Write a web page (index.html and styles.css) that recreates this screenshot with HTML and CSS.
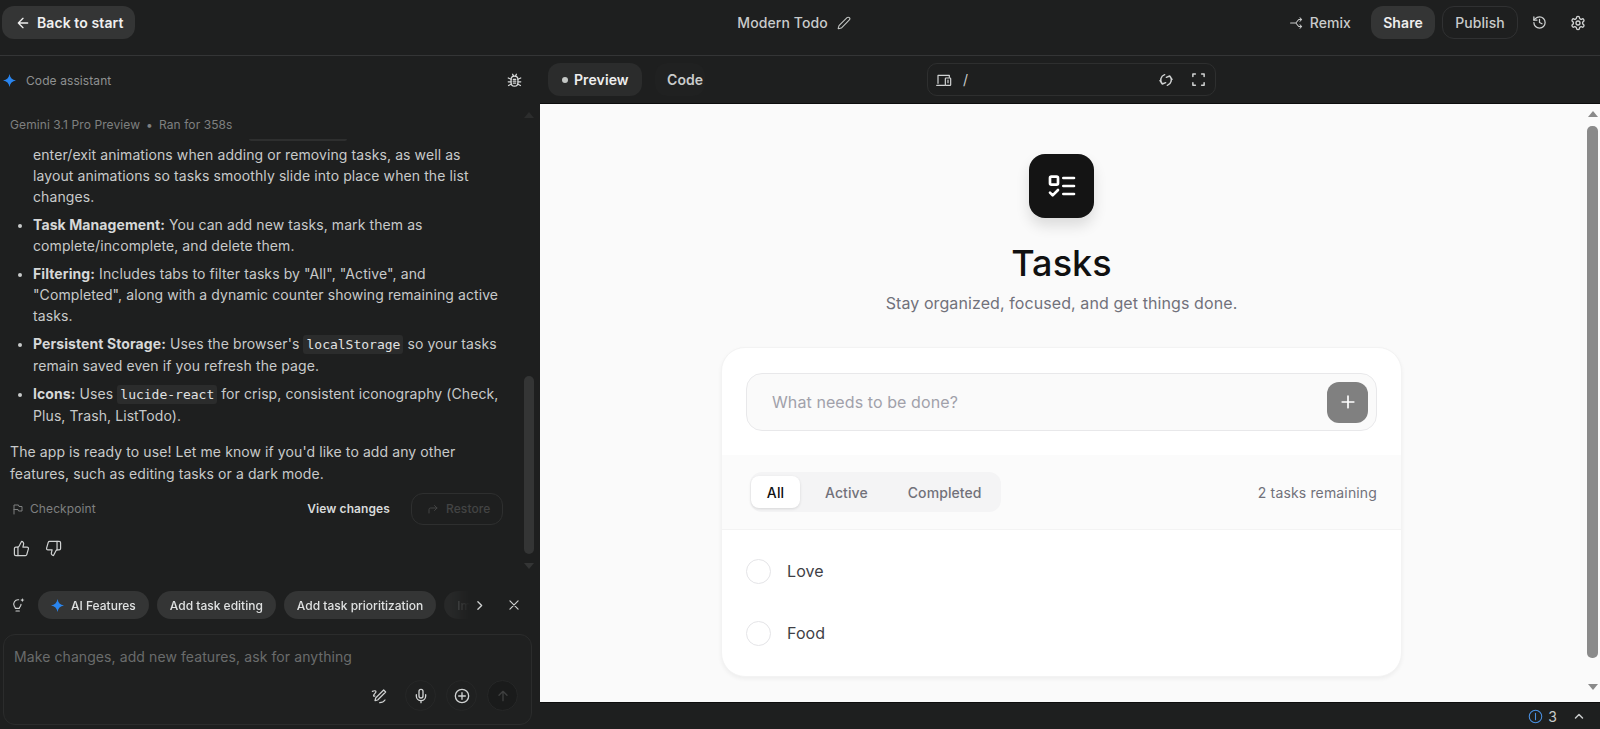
FILE: index.html
```html
<!DOCTYPE html>
<html lang="en">
<head>
<meta charset="utf-8">
<title>Modern Todo</title>
<link rel="stylesheet" href="styles.css">
</head>
<body>
<header class="topbar">
  <div class="top-left">
    <button class="btn btn-fill back"><svg class="ic" viewBox="0 0 24 24"><path d="M19 12H5M12 19l-7-7 7-7"/></svg>Back to start</button>
  </div>
  <div class="top-center">
    <span class="app-title">Modern Todo</span>
    <svg class="ic ic-pencil" viewBox="0 0 24 24"><path d="M21.174 6.812a1 1 0 0 0-3.986-3.987L3.842 16.174a2 2 0 0 0-.5.83l-1.321 4.352a.5.5 0 0 0 .623.622l4.353-1.32a2 2 0 0 0 .83-.497z"/></svg>
  </div>
  <div class="top-right">
    <span class="remix"><svg class="ic ic-remix" viewBox="0 0 24 24"><path d="M1 12h9l5-6h4M10 12l5 6h4M17 3l3 3-3 3M17 15l3 3-3 3"/></svg>Remix</span>
    <button class="btn btn-fill share">Share</button>
    <button class="btn btn-line publish">Publish</button>
    <svg class="ic ic-history" viewBox="0 0 24 24"><path d="M3 12a9 9 0 1 0 9-9 9.75 9.75 0 0 0-6.74 2.74L3 8"/><path d="M3 3v5h5M12 7v5l4 2"/></svg>
    <svg class="ic ic-gear" viewBox="0 0 24 24"><path d="M12.22 2h-.44a2 2 0 0 0-2 2v.18a2 2 0 0 1-1 1.73l-.43.25a2 2 0 0 1-2 0l-.15-.08a2 2 0 0 0-2.73.73l-.22.38a2 2 0 0 0 .73 2.73l.15.1a2 2 0 0 1 1 1.72v.51a2 2 0 0 1-1 1.74l-.15.09a2 2 0 0 0-.73 2.73l.22.38a2 2 0 0 0 2.73.73l.15-.08a2 2 0 0 1 2 0l.43.25a2 2 0 0 1 1 1.73V20a2 2 0 0 0 2 2h.44a2 2 0 0 0 2-2v-.18a2 2 0 0 1 1-1.73l.43-.25a2 2 0 0 1 2 0l.15.08a2 2 0 0 0 2.73-.73l.22-.39a2 2 0 0 0-.73-2.73l-.15-.08a2 2 0 0 1-1-1.74v-.5a2 2 0 0 1 1-1.74l.15-.09a2 2 0 0 0 .73-2.73l-.22-.38a2 2 0 0 0-2.73-.73l-.15.08a2 2 0 0 1-2 0l-.43-.25a2 2 0 0 1-1-1.73V4a2 2 0 0 0-2-2z"/><circle cx="12" cy="12" r="3"/></svg>
  </div>
</header>

<main class="workspace">
  <aside class="assistant">
    <div class="assistant-head">
      <span class="assistant-name">
        <svg class="spark" viewBox="0 0 24 24"><path d="M12 0c1 7 5 11 12 12-7 1-11 5-12 12-1-7-5-11-12-12 7-1 11-5 12-12z"/></svg>
        Code assistant
      </span>
      <svg class="ic ic-bug" viewBox="0 0 24 24"><rect x="6.500" y="5" width="11" height="16" rx="5.500"/><path d="M9 2l1.500 3M15 2l-1.500 3M2 8l4.500 2M22 8l-4.500 2M2 14h4.500M22 14h-4.500M2.500 20l4.500-2.500M21.500 20l-4.500-2.500M10 10h4M10 13h4M10 16h4"/></svg>
    </div>
    <div class="chat-scroll">
      <div class="chat">
        <div class="meta">Gemini 3.1 Pro Preview<span class="meta-dot">•</span>Ran for 358s</div>
        <div class="clip-edge"></div>
        <ul class="points">
          <li class="first">enter/exit animations when adding or removing tasks, as well as layout animations so tasks smoothly slide into place when the list changes.</li>
          <li><b>Task Management:</b> You can add new tasks, mark them as complete/incomplete, and delete them.</li>
          <li><b>Filtering:</b> Includes tabs to filter tasks by "All", "Active", and "Completed", along with a dynamic counter showing remaining active tasks.</li>
          <li><b>Persistent Storage:</b> Uses the browser's <code>localStorage</code> so your tasks remain saved even if you refresh the page.</li>
          <li><b>Icons:</b> Uses <code>lucide-react</code> for crisp, consistent iconography (Check, Plus, Trash, ListTodo).</li>
        </ul>
        <p class="closing">The app is ready to use! Let me know if you'd like to add any other features, such as editing tasks or a dark mode.</p>
        <div class="checkpoint">
          <span class="cp-label"><svg class="ic ic-flag" viewBox="0 0 24 24"><path d="M4 22V4h9l1 3h6v9h-7l-1-3H4"/></svg>Checkpoint</span>
          <span class="view-changes">View changes</span>
          <span class="restore"><svg class="ic ic-restore" viewBox="0 0 24 24"><path d="M4 20v-7a3 3 0 0 1 3-3h13M15 5l5 5-5 5"/></svg>Restore</span>
        </div>
        <div class="feedback">
          <svg class="ic ic-thumb" viewBox="0 0 24 24"><path d="M7 10v12"/><path d="M15 5.880 14 10h5.830a2 2 0 0 1 1.920 2.560l-2.330 8A2 2 0 0 1 17.500 22H4a2 2 0 0 1-2-2v-8a2 2 0 0 1 2-2h2.760a2 2 0 0 0 1.790-1.110L12 2a3.130 3.130 0 0 1 3 3.880Z"/></svg>
          <svg class="ic ic-thumb" viewBox="0 0 24 24"><path d="M17 14V2"/><path d="M9 18.120 10 14H4.170a2 2 0 0 1-1.920-2.560l2.330-8A2 2 0 0 1 6.500 2H20a2 2 0 0 1 2 2v8a2 2 0 0 1-2 2h-2.760a2 2 0 0 0-1.790 1.110L12 22a3.130 3.130 0 0 1-3-3.880Z"/></svg>
        </div>
      </div>
      <div class="chat-bar">
        <span class="arrow-up dim"></span>
        <span class="chat-thumb"></span>
        <span class="arrow-down dim"></span>
      </div>
    </div>
    <div class="suggestions">
      <svg class="ic ic-bulb" viewBox="0 0 24 24"><path d="M13 4.200A6.500 6.500 0 0 0 6.500 14c.7.800 1.500 1.500 1.500 3h6c0-1.500.8-2.200 1.500-3 .7-.800 1-1.700 1-3M9 21h5"/><path class="bulb-star" d="M18.500 1c.3 2.200 1.300 3.200 3.500 3.500-2.200.3-3.200 1.300-3.500 3.500-.3-2.200-1.300-3.200-3.500-3.500 2.200-.3 3.200-1.300 3.500-3.500z"/></svg>
      <div class="chips">
        <span class="chip"><svg class="spark spark-sm" viewBox="0 0 24 24"><path d="M12 0c1 7 5 11 12 12-7 1-11 5-12 12-1-7-5-11-12-12 7-1 11-5 12-12z"/></svg>AI Features</span>
        <span class="chip">Add task editing</span>
        <span class="chip">Add task prioritization</span>
        <span class="chip chip-cut">Improve</span>
      </div>
      <svg class="ic ic-chev" viewBox="0 0 24 24"><path d="M9 5l7 7-7 7"/></svg>
      <svg class="ic ic-close" viewBox="0 0 24 24"><path d="M5 5l14 14M19 5L5 19"/></svg>
    </div>
    <div class="composer">
      <div class="composer-text">Make changes, add new features, ask for anything</div>
      <div class="composer-tools">
        <svg class="ic ic-wand" viewBox="0 0 24 24"><path d="M19 3l3 3L10 18l-4 1 1-4z"/><path d="M2 5c5-2 7 0 4 3s-3 5 0 4M13 22c3 0 6-1 8-4"/></svg>
        <span class="round"><svg class="ic" viewBox="0 0 24 24"><path d="M12 2a3 3 0 0 0-3 3v7a3 3 0 0 0 6 0V5a3 3 0 0 0-3-3Z"/><path d="M19 10v2a7 7 0 0 1-14 0v-2M12 19v3"/></svg></span>
        <span class="round"><svg class="ic" viewBox="0 0 24 24"><circle cx="12" cy="12" r="10"/><path d="M12 7v10M7 12h10"/></svg></span>
        <span class="round send"><svg class="ic" viewBox="0 0 24 24"><path d="M12 19V5M6 11l6-6 6 6"/></svg></span>
      </div>
    </div>
  </aside>

  <section class="stage">
    <div class="stage-bar">
      <div class="tabs">
        <span class="tab tab-on"><i class="tab-dot"></i>Preview</span>
        <span class="tab tab-code">Code</span>
      </div>
      <div class="urlbar">
        <svg class="ic ic-device" viewBox="0 0 24 24"><path d="M3 17V5h17v3M1 20h12"/><rect x="14" y="9" width="8" height="11" rx="1"/><path d="M18 12v4"/></svg>
        <span class="url">/</span>
        <svg class="ic ic-sync" viewBox="0 0 24 24"><path d="M10 4A8.500 8.500 0 0 0 6.500 18M3 13l3.500 5 5-2M14 20a8.500 8.500 0 0 0 3.500-14M21 11l-3.500-5-5 2"/></svg>
        <svg class="ic ic-full" viewBox="0 0 24 24"><path d="M3 7V3h4M17 3h4v4M21 17v4h-4M7 21H3v-4"/></svg>
      </div>
    </div>
    <div class="viewport">
      <div class="page">
        <div class="logo"><svg class="logo-ic" viewBox="0 0 24 24"><rect x="3" y="5" width="6" height="6" rx="1"/><path d="M3 17l2 2 4-4M13 6h8M13 12h8M13 18h8"/></svg></div>
        <h1 class="page-title">Tasks</h1>
        <p class="page-sub">Stay organized, focused, and get things done.</p>
        <div class="card">
          <div class="add-row">
            <div class="add-input">
              <span class="placeholder">What needs to be done?</span>
              <span class="add-btn"><svg class="add-ic" viewBox="0 0 24 24"><path d="M5 12h14M12 5v14"/></svg></span>
            </div>
          </div>
          <div class="filter-row">
            <div class="filters">
              <span class="filter filter-on">All</span>
              <span class="filter">Active</span>
              <span class="filter">Completed</span>
            </div>
            <span class="remaining">2 tasks remaining</span>
          </div>
          <ul class="tasks">
            <li class="task"><span class="check"></span>Love</li>
            <li class="task"><span class="check"></span>Food</li>
          </ul>
        </div>
      </div>
      <div class="page-bar">
        <span class="arrow-up"></span>
        <span class="page-thumb"></span>
        <span class="arrow-down"></span>
      </div>
    </div>
    <div class="statusbar">
      <svg class="ic ic-info" viewBox="0 0 24 24"><circle cx="12" cy="12" r="10"/><path d="M12 7v10"/></svg>
      <span class="count">3</span>
      <svg class="ic ic-up" viewBox="0 0 24 24"><path d="M5 16l7-7 7 7"/></svg>
    </div>
  </section>
</main>
</body>
</html>
```

FILE: styles.css
```css
* { box-sizing: border-box; }
html, body { height: 100%; }
body {
  margin: 0;
  height: 729px;
  overflow: hidden;
  display: flex;
  flex-direction: column;
  background: #1e1f1f;
  color: #e3e3e3;
  font-family: Inter, "Liberation Sans", sans-serif;
  font-size: 14px;
  letter-spacing: .09px;
}
.ic { width: 16px; height: 16px; flex: none; fill: none; stroke: currentColor; stroke-width: 2; stroke-linecap: round; stroke-linejoin: round; }

/* top bar */
.topbar {
  height: 56px;
  flex: none;
  display: grid;
  grid-template-columns: 1fr auto 1fr;
  align-items: start;
  border-bottom: 1px solid #343536;
  padding: 6px 14px 0 2px;
}
.top-left { display: flex; }
.top-center { display: flex; align-items: center; gap: 9px; height: 33px; }
.app-title { font-weight: 500; color: #c9cbcb; }
.ic-pencil { width: 14px; height: 14px; color: #c4c7c5; stroke-width: 1.8; }
.top-right { display: flex; align-items: center; justify-content: flex-end; height: 33px; }
.btn {
  height: 33px;
  border-radius: 12px;
  border: 1px solid transparent;
  font: 600 14px Inter, "Liberation Sans", sans-serif;
  letter-spacing: .09px;
  color: #e8e8e8;
  background: none;
  display: flex;
  align-items: center;
  padding: 0;
}
.btn-fill { background: #343535; }
.back { width: 133px; padding-left: 12px; gap: 6px; color: #f0f0f0; }
.back .ic { width: 16px; height: 16px; }
.remix { display: flex; align-items: center; gap: 6px; font-weight: 500; color: #c9cbcb; margin-right: 20px; }
.ic-remix { width: 14px; height: 14px; stroke-width: 1.8; }
.share { width: 64px; justify-content: center; color: #eee; }
.publish { width: 76px; justify-content: center; margin-left: 7px; border-color: #303132; color: #c9cbcb; font-weight: 500; }
.ic-history { margin-left: 14px; color: #d0d2d2; width: 15px; height: 15px; }
.ic-gear { margin-left: 23px; color: #d0d2d2; width: 16px; height: 16px; }

/* layout */
.workspace {
  flex: 1;
  min-height: 0;
  display: grid;
  grid-template-columns: 540px 1fr;
}

/* assistant */
.assistant { display: flex; flex-direction: column; min-height: 0; }
.assistant-head {
  height: 48px;
  flex: none;
  display: flex;
  align-items: center;
  justify-content: space-between;
  padding: 0 18px 0 3px;
}
.assistant-name { display: flex; align-items: center; gap: 10px; font-size: 12px; color: #8f9191; }
.spark { width: 13px; height: 13px; fill: #2a85ee; flex: none; }
.ic-bug { width: 15px; height: 15px; color: #d8dada; stroke-width: 2; }
.chat-scroll { flex: 1; min-height: 0; display: flex; overflow: hidden; }
.chat { flex: 1; min-width: 0; padding: 13px 20px 0 10px; }
.meta { font-size: 12px; line-height: 15px; color: #7e8080; }
.meta-dot { margin: 0 6px; font-size: 12px; }
.clip-edge { width: 98px; height: 2px; margin: 7px 0 3px 239px; background: #2e2f2f; border-radius: 0 0 4px 4px; }
.points { margin: 0; padding: 0 2px 0 23px; font-size: 14px; line-height: 21px; color: #c8caca; }
.points li { margin-top: 7px; }
.points li::marker { font-size: 12px; }
.points .first { margin-top: 0; list-style: none; }
.points b { font-weight: 700; color: #d6d8d8; }
code {
  font-family: "DejaVu Sans Mono", "Liberation Mono", monospace;
  font-size: 13px;
  letter-spacing: 0;
  background: #2b2c2c;
  padding: 2px 3px;
  border-radius: 3px;
  color: #e0e2e2;
}
.closing { margin: 15px 0 0; line-height: 22px; color: #c8caca; }
.checkpoint { display: flex; align-items: center; margin-top: 7px; height: 33px; }
.cp-label { display: flex; align-items: center; gap: 6px; font-size: 12px; color: #7e8080; flex: 1; padding-left: 2px; }
.ic-flag { width: 12px; height: 12px; }
.view-changes { font-size: 12px; font-weight: 600; color: #d8dada; margin-right: 21px; }
.restore {
  display: flex; align-items: center; gap: 7px;
  width: 92px; height: 32px; padding-left: 15px;
  border: 1px solid #2e2f2f; border-radius: 12px;
  font-size: 12px; font-weight: 500; color: #434444;
}
.ic-restore { width: 12px; height: 12px; }
.feedback { display: flex; gap: 15px; margin-top: 15px; padding-left: 3px; color: #d0d2d2; }
.ic-thumb { width: 17px; height: 17px; stroke-width: 1.7; }
.chat-bar {
  width: 17px;
  flex: none;
  padding: 8px 6px 0 1px;
  display: flex;
  flex-direction: column;
  align-items: center;
}
.chat-thumb { width: 10px; height: 178px; margin-top: 258px; background: #343535; border-radius: 5px; }
.arrow-up, .arrow-down { width: 0; height: 0; border-left: 5px solid transparent; border-right: 5px solid transparent; }
.arrow-up { border-bottom: 6px solid #8a8a8a; }
.arrow-down { border-top: 6px solid #8a8a8a; }
.arrow-up.dim { border-bottom-color: #2c2d2d; }
.arrow-down.dim { border-top-color: #343535; margin-top: 9px; }

.suggestions {
  height: 28px;
  margin: 12px 0 15px;
  flex: none;
  display: flex;
  align-items: center;
  padding-left: 10px;
  color: #d0d2d2;
}
.ic-bulb { width: 16px; height: 16px; stroke-width: 1.7; }
.bulb-star { fill: currentColor; stroke: none; }
.chips {
  display: flex;
  gap: 8px;
  margin-left: 12px;
  width: 442px;
  overflow: hidden;
  flex: none;
  letter-spacing: 0;
  -webkit-mask-image: linear-gradient(to right, #000 412px, transparent 432px);
  mask-image: linear-gradient(to right, #000 412px, transparent 432px);
}
.chip {
  flex: none;
  height: 28px;
  padding: 0 13px;
  border-radius: 14px;
  background: #343535;
  display: flex;
  align-items: center;
  gap: 7px;
  font-size: 12px;
  font-weight: 500;
  color: #dfe1e1;
}
.spark-sm { width: 13px; height: 13px; }
.chip-cut { color: #5b5c5c; background: #282929; }
.ic-chev { width: 13px; height: 13px; margin-left: -7px; stroke-width: 2.4; }
.ic-close { width: 14px; height: 14px; margin-left: 21px; }
.composer {
  margin: 0 8px 4px 3px;
  height: 91px;
  flex: none;
  border: 1px solid #2b2c2c;
  border-radius: 12px;
  padding: 13px 10px 0;
  background: #1f2020;
}
.composer-text { color: #6a6c6c; font-size: 14px; line-height: 18px; }
.composer-tools { display: flex; align-items: center; justify-content: flex-end; gap: 10px; margin-top: 14px; padding-right: 3px; color: #d0d2d2; }
.ic-wand { width: 16px; height: 16px; margin-right: 8px; stroke-width: 1.8; }
.round { width: 31px; height: 31px; border-radius: 50%; border: 1px solid #262727; display: flex; align-items: center; justify-content: center; }
.send { background: #1a1b1b; color: #3f4040; }

/* right side */
.stage { display: flex; flex-direction: column; min-height: 0; }
.stage-bar {
  height: 47px;
  flex: none;
  display: flex;
  align-items: center;
  padding: 0 0 0 8px;
}
.tabs { display: flex; gap: 13px; width: 379px; }
.tab {
  height: 33px;
  border-radius: 12px;
  display: flex;
  align-items: center;
  font-weight: 600;
  color: #c9cbcb;
}
.tab-on { width: 94px; background: #2b2c2c; color: #eee; padding-left: 14px; gap: 6px; }
.tab-dot { width: 6px; height: 6px; border-radius: 50%; background: #c4c7c5; }
.tab-code { width: 50px; padding-left: 12px; background: #202121; }
.urlbar {
  width: 289px;
  height: 33px;
  border: 1px solid #2e2f2f;
  border-radius: 10px;
  display: flex;
  align-items: center;
  padding: 0 9px 0 8px;
  color: #d0d2d2;
}
.ic-device { width: 16px; height: 16px; stroke-width: 1.8; }
.url { margin-left: 11px; flex: 1; color: #c9cbcb; }
.ic-sync { width: 16px; height: 16px; stroke-width: 2.2; }
.ic-full { width: 15px; height: 15px; margin-left: 17px; stroke-width: 2.4; }
.viewport {
  flex: 1;
  min-height: 0;
  display: flex;
  background: #fafafa;
  border-top: 1px solid #0d0d0d;
  border-bottom: 1px solid #0d0d0d;
}
.page {
  flex: 1;
  min-width: 0;
  padding: 50px 4px 0 0;
  display: flex;
  flex-direction: column;
  align-items: center;
  color: #111;
}
.logo {
  width: 65px;
  height: 64px;
  border-radius: 16px;
  background: #141414;
  display: flex;
  align-items: center;
  justify-content: center;
  box-shadow: 0 8px 14px rgba(0,0,0,.12);
}
.logo-ic { width: 32px; height: 32px; fill: none; stroke: #fff; stroke-width: 2; stroke-linecap: round; stroke-linejoin: round; }
.page-title { margin: 25px 0 0; font-size: 36px; line-height: 40px; font-weight: 500; color: #111; }
.page-sub { margin: 8px 0 0; font-size: 16px; line-height: 24px; color: #71717a; }
.card {
  width: 681px;
  margin-top: 32px;
  background: #fff;
  border-radius: 24px;
  border: 1px solid #f3f3f3;
  box-shadow: 0 2px 4px rgba(0,0,0,.05);
  overflow: hidden;
}
.add-row { padding: 25px 24px 24px; height: 107px; }
.add-input {
  height: 58px;
  border: 1px solid #e8e8ea;
  border-radius: 16px;
  background: #fafafa;
  display: flex;
  align-items: center;
  justify-content: space-between;
  padding: 0 8px 0 25px;
}
.placeholder { font-size: 16px; color: #a1a1aa; }
.add-btn { width: 41px; height: 41px; border-radius: 12px; background: #808080; display: flex; align-items: center; justify-content: center; }
.add-ic { width: 20px; height: 20px; fill: none; stroke: #fff; stroke-width: 2; stroke-linecap: round; }
.filter-row {
  height: 75px;
  background: #fbfbfb;
  border-bottom: 1px solid #f3f3f3;
  display: flex;
  align-items: center;
  justify-content: space-between;
  padding: 0 24px 0 28px;
}
.filters { display: flex; align-items: center; height: 40px; width: 251px; padding: 0 1px; border-radius: 12px; background: #f4f4f5; }
.filter { font-size: 14px; font-weight: 500; color: #71717a; height: 32px; display: flex; align-items: center; padding: 0 24px 0 25px; }
.filter:nth-child(2) { padding: 0 17px 0 25px; }
.filter:nth-child(3) { padding: 0 0 0 23px; }
.filter-on { width: 49px; padding: 0; justify-content: center; background: #fff; color: #111; border-radius: 8px; box-shadow: 0 1px 3px rgba(0,0,0,.12); }
.remaining { color: #71717a; font-size: 14px; letter-spacing: .15px; }
.tasks { list-style: none; margin: 0; padding: 10px 0 12px; }
.task { height: 62px; display: flex; align-items: center; gap: 16px; padding-left: 24px; font-size: 16px; color: #3f3f46; }
.check { width: 25px; height: 25px; border-radius: 50%; border: 1px solid #e4e4e7; }
.page-bar { width: 13px; flex: none; display: flex; flex-direction: column; align-items: center; padding: 7px 2px 0 0; }
.page-thumb { width: 11px; height: 532px; margin-top: 9px; background: #8a8a8a; border-radius: 5px; }
.page-bar .arrow-down { margin-top: 26px; }
.statusbar {
  height: 26px;
  flex: none;
  display: flex;
  align-items: center;
  justify-content: flex-end;
  padding-right: 15px;
  color: #c9cbcb;
}
.ic-info { width: 15px; height: 15px; color: #4a90e2; stroke-width: 1.700; }
.count { margin-left: 5px; }
.ic-up { width: 12px; height: 12px; margin-left: 16px; stroke-width: 3; }
```
